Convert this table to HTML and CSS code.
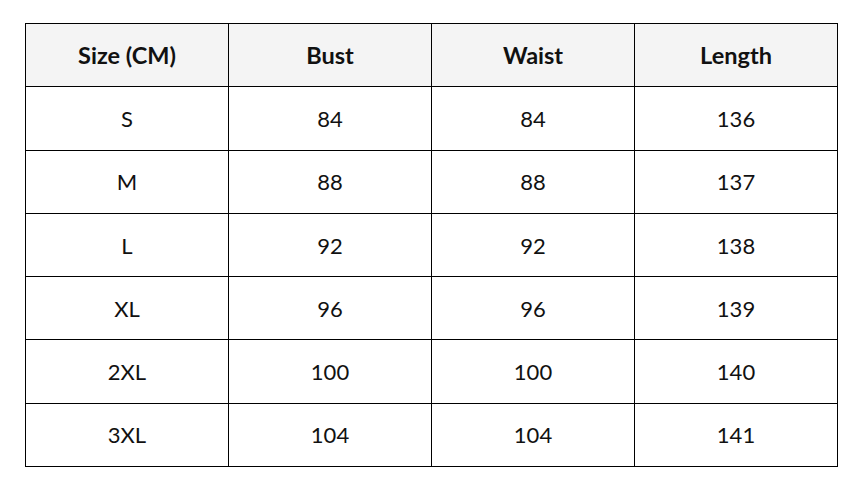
FILE: index.html
```html
<!DOCTYPE html>
<html>
<head>
<meta charset="utf-8">
<link rel="stylesheet" href="styles.css">
</head>
<body>
<table class="size-table">
  <thead>
    <tr><th>Size (CM)</th><th>Bust</th><th>Waist</th><th>Length</th></tr>
  </thead>
  <tbody>
    <tr><td>S</td><td>84</td><td>84</td><td>136</td></tr>
    <tr><td>M</td><td>88</td><td>88</td><td>137</td></tr>
    <tr><td>L</td><td>92</td><td>92</td><td>138</td></tr>
    <tr><td>XL</td><td>96</td><td>96</td><td>139</td></tr>
    <tr><td>2XL</td><td>100</td><td>100</td><td>140</td></tr>
    <tr><td>3XL</td><td>104</td><td>104</td><td>141</td></tr>
  </tbody>
</table>
</body>
</html>
```
FILE: styles.css
```css
html, body {
  margin: 0;
  padding: 0;
  background: #fff;
}
body {
  padding: 23px 0 0 25px;
  font-family: Lato, "Liberation Sans", sans-serif;
  color: #111;
}
.size-table {
  border-collapse: collapse;
  width: 813px;
  table-layout: fixed;
}
.size-table th,
.size-table td {
  border: 1px solid #000;
  text-align: center;
  vertical-align: middle;
  padding: 0;
  height: 62.3px;
  font-size: 22px;
}
.size-table th {
  background: #f4f4f4;
  font-weight: 700;
  font-size: 23.5px;
}
.size-table td {
  font-weight: 400;
}
```
